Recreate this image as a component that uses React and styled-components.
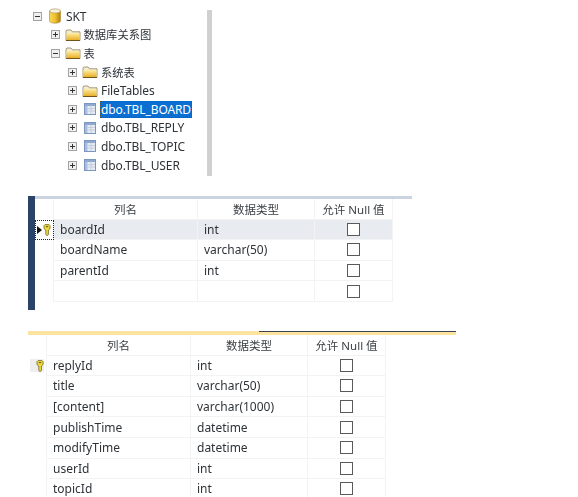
import React from "react";
import styled, { createGlobalStyle } from "styled-components";

const GlobalStyle = createGlobalStyle`
  html, body {
    margin: 0;
    padding: 0;
    background: #fff;
  }
  body {
    font-family: "Noto Sans", "Noto Sans CJK SC", sans-serif;
    color: #2e3338;
    overflow: hidden;
  }
`;

const Page = styled.div`
  width: 578px;
  height: 497px;
  overflow: hidden;
  filter: blur(0.3px);
`;

const TreePanel = styled.div`
  display: flex;
  margin: 10px 0 0 30px;
  width: 182px;
  height: 166px;
  justify-content: space-between;
`;

const TreeList = styled.ul`
  list-style: none;
  margin: -3px 0 0;
  padding: 0;
`;

const TreeRow = styled.li`
  display: flex;
  align-items: center;
  height: 18.6px;
  padding-left: ${({ $level }) => $level * 17.5}px;
`;

const Expander = styled.svg`
  width: 9px;
  height: 9px;
  margin: 0 5px 0 3px;
  flex: none;
`;

const NodeIcon = styled.svg`
  width: 16px;
  height: 16px;
  flex: none;
  margin-right: 2px;
`;

const TreeLabel = styled.span`
  font-size: ${({ $cjk }) => ($cjk ? 11.3 : 12)}px;
  letter-spacing: ${({ $cjk }) => ($cjk ? 0 : -0.1)}px;
  line-height: 17px;
  padding: 0 1px;
  white-space: nowrap;
  color: ${({ $selected }) => ($selected ? "#fff" : "#2e3338")};
  background: ${({ $selected }) => ($selected ? "#0a6fd0" : "transparent")};
  outline: ${({ $selected }) => ($selected ? "1px dotted #6b4a20" : "none")};
  outline-offset: -1px;
`;

const Scroller = styled.div`
  width: 5px;
  background: #d0d0d0;
`;

const Designer = styled.section`
  display: flex;
  margin: ${({ $top }) => $top}px 0 0 28px;
`;

const SideBar = styled.div`
  width: 7px;
  height: 114px;
  flex: none;
  background: #2c4369;
`;

const Body = styled.div`
  flex: none;
`;

const Band = styled.div`
  position: relative;
  width: ${({ $width }) => $width}px;
  height: ${({ $height }) => $height}px;
  background: ${({ $color }) => $color};
`;

const BandLine = styled.div`
  position: absolute;
  top: 0;
  right: 0;
  width: 197px;
  height: 1px;
  background: #3d4350;
`;

const Grid = styled.div`
  display: grid;
  grid-template-columns: 19px 144px 117px 78px;
  grid-auto-rows: 20.6px;
  width: 358px;
`;

const Cell = styled.div`
  display: flex;
  align-items: center;
  padding-left: 6px;
  font-size: 12px;
  color: #2e3338;
  white-space: nowrap;
  border-right: 1px solid #f3f3f3;
  border-bottom: 1px solid #f3f3f3;
  background: ${({ $active }) => ($active ? "#e8ebef" : "#fff")};
`;

const HeadCell = styled(Cell)`
  justify-content: center;
  padding: 0;
  font-size: 11.5px;
  color: #3c4044;
`;

const RowHead = styled.div`
  display: flex;
  align-items: center;
  justify-content: flex-end;
  padding-right: 2px;
  border-right: 1px solid #f3f3f3;
  outline: ${({ $focused }) => ($focused ? "1px dotted #222" : "none")};
  outline-offset: -1px;
`;

const KeyChip = styled.div`
  display: flex;
  align-items: center;
  justify-content: flex-end;
  width: ${({ $shaded }) => ($shaded ? 14 : 8)}px;
  height: 13px;
  background: ${({ $shaded }) => ($shaded ? "#eee" : "transparent")};
`;

const CheckCell = styled(Cell)`
  justify-content: center;
  padding: 0;
`;

const Check = styled.span`
  width: 11px;
  height: 11px;
  border: 1px solid #5a5a5a;
  background: #fff;
`;

const Arrow = styled.span`
  width: 0;
  height: 0;
  margin-right: 1px;
  border-left: 5px solid #111;
  border-top: 4px solid transparent;
  border-bottom: 4px solid transparent;
`;

const ExpandIcon = ({ open }) => (
  <Expander viewBox="0 0 9 9">
    <rect x="0.5" y="0.5" width="8" height="8" fill="#f0f0f0" stroke="#a2a2a2" />
    <path d="M2 4.5h5" stroke="#333" />
    {!open && <path d="M4.5 2v5" stroke="#333" />}
  </Expander>
);

const DatabaseIcon = () => (
  <NodeIcon viewBox="0 0 16 16">
    <defs>
      <linearGradient id="db" x1="0" x2="1" y1="0" y2="0">
        <stop offset="0" stopColor="#f8d95c" />
        <stop offset="0.5" stopColor="#f2c22e" />
        <stop offset="1" stopColor="#ad7f10" />
      </linearGradient>
    </defs>
    <path d="M2.5 3v10c0 1.2 2.4 2.2 5.5 2.2s5.5-1 5.5-2.2V3z" fill="url(#db)" stroke="#a98a3c" strokeWidth="0.6" />
    <ellipse cx="8" cy="3" rx="5.5" ry="2.1" fill="#f4f0e0" stroke="#a98a3c" strokeWidth="0.6" />
  </NodeIcon>
);

const FolderIcon = () => (
  <NodeIcon viewBox="0 0 16 16">
    <defs>
      <linearGradient id="folder" x1="0" x2="0" y1="0" y2="1">
        <stop offset="0" stopColor="#fdeea6" />
        <stop offset="1" stopColor="#e8ad22" />
      </linearGradient>
    </defs>
    <path d="M1 4.2V13.5h14V4.8H7.4L6 3H1.8z" fill="#f1ecd6" stroke="#857345" strokeWidth="0.7" />
    <rect x="1.5" y="6" width="13" height="7.3" fill="url(#folder)" />
    <path d="M1 13.5h14" stroke="#6f5519" />
  </NodeIcon>
);

const TableIcon = () => (
  <NodeIcon viewBox="0 0 16 16">
    <rect x="2.5" y="2.5" width="11" height="11" fill="#e6ebf3" stroke="#7c97bf" />
    <rect x="3" y="3" width="10" height="2" fill="#8faad2" />
    <rect x="3" y="5" width="2.5" height="8" fill="#a9bedd" />
    <path d="M5.5 7.5h7.5M5.5 10h7.5M9 5v8" stroke="#bcc8da" strokeWidth="0.8" />
  </NodeIcon>
);

const KeyIcon = () => (
  <svg width="8" height="12" viewBox="0 0 8 12">
    <path d="M1 1.6 2 .6h4l1 1v3L5.4 6v4.6L4 11.6 2.8 10.6V6L1 4.6z" fill="#f2dc3e" stroke="#6e6420" strokeWidth="0.8" />
    <rect x="2.8" y="2" width="2.4" height="1.2" fill="#6e6420" />
  </svg>
);

const treeNodes = [
  { level: 0, open: true, icon: "db", label: "SKT" },
  { level: 1, icon: "folder", label: "数据库关系图", cjk: true },
  { level: 1, open: true, icon: "folder", label: "表", cjk: true },
  { level: 2, icon: "folder", label: "系统表", cjk: true },
  { level: 2, icon: "folder", label: "FileTables" },
  { level: 2, icon: "table", label: "dbo.TBL_BOARD", selected: true },
  { level: 2, icon: "table", label: "dbo.TBL_REPLY" },
  { level: 2, icon: "table", label: "dbo.TBL_TOPIC" },
  { level: 2, icon: "table", label: "dbo.TBL_USER" },
];

const boardFields = [
  ["boardId", "int"],
  ["boardName", "varchar(50)"],
  ["parentId", "int"],
  ["", ""],
];

const replyFields = [
  ["replyId", "int"],
  ["title", "varchar(50)"],
  ["[content]", "varchar(1000)"],
  ["publishTime", "datetime"],
  ["modifyTime", "datetime"],
  ["userId", "int"],
  ["topicId", "int"],
];

const icons = { db: DatabaseIcon, folder: FolderIcon, table: TableIcon };

function Tree() {
  return (
    <TreePanel>
      <TreeList>
        {treeNodes.map((node) => {
          const Icon = icons[node.icon];
          return (
            <TreeRow key={node.label} $level={node.level}>
              <ExpandIcon open={node.open} />
              <Icon />
              <TreeLabel $selected={node.selected} $cjk={node.cjk}>
                {node.label}
              </TreeLabel>
            </TreeRow>
          );
        })}
      </TreeList>
      <Scroller />
    </TreePanel>
  );
}

function FieldGrid({ fields, focused }) {
  return (
    <Grid>
      <RowHead />
      <HeadCell>列名</HeadCell>
      <HeadCell>数据类型</HeadCell>
      <HeadCell>允许 Null 值</HeadCell>
      {fields.map(([name, type], i) => {
        const active = focused && i === 0;
        return (
          <React.Fragment key={i}>
            <RowHead $focused={active}>
              {active && <Arrow />}
              {i === 0 && (
                <KeyChip $shaded={!focused}>
                  <KeyIcon />
                </KeyChip>
              )}
            </RowHead>
            <Cell $active={active}>{name}</Cell>
            <Cell $active={active}>{type}</Cell>
            <CheckCell $active={active}>
              <Check />
            </CheckCell>
          </React.Fragment>
        );
      })}
    </Grid>
  );
}

export default function App() {
  return (
    <Page>
      <GlobalStyle />
      <Tree />
      <Designer $top={20}>
        <SideBar />
        <Body>
          <Band $width={377} $height={3} $color="#ccd3e0" />
          <FieldGrid fields={boardFields} focused />
        </Body>
      </Designer>
      <Designer $top={21}>
        <Body>
          <Band $width={428} $height={4} $color="#fde3a0">
            <BandLine />
          </Band>
          <FieldGrid fields={replyFields} />
        </Body>
      </Designer>
    </Page>
  );
}
